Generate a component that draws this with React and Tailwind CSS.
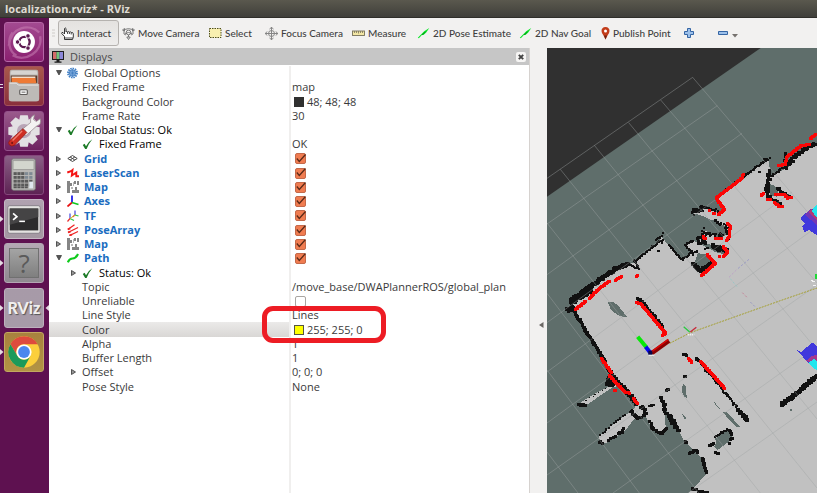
import React from "react";

/* ---------- small drawing helpers ---------- */

function noise(n) {
  const s = Math.sin(n * 127.1) * 43758.5453;
  return s - Math.floor(s);
}

/* Occupied map cells scattered along a polyline */
function Wall({ pts, size = 6, jitter = 0, step = 3, skip = 0, color = "#111111" }) {
  let d = "";
  let k = pts.length * 13 + pts[0][0];
  for (let i = 0; i < pts.length - 1; i++) {
    const [x0, y0] = pts[i];
    const [x1, y1] = pts[i + 1];
    const n = Math.max(1, Math.round(Math.hypot(x1 - x0, y1 - y0) / step));
    for (let j = 0; j <= n; j++) {
      k += 1;
      if (noise(k + 0.5) < skip) continue;
      const x = Math.round((x0 + ((x1 - x0) * j) / n + (noise(k) - 0.5) * jitter - size / 2) / 3) * 3;
      const y = Math.round((y0 + ((y1 - y0) * j) / n + (noise(k + 7) - 0.5) * jitter - size / 2) / 3) * 3;
      d += `M${x} ${y}h${size}v${size}h${-size}z`;
    }
  }
  return <path d={d} fill={color} />;
}

const walls = [
  { pts: [[810, 68], [775, 88], [745, 108], [728, 130], [718, 142]], size: 9, jitter: 7 },
  { pts: [[714, 106], [720, 130]], size: 9, jitter: 10 },
  { pts: [[712, 140], [675, 168], [662, 165]], size: 6, jitter: 4 },
  { pts: [[664, 150], [668, 180], [658, 205], [665, 228], [685, 245], [706, 258]], size: 9, jitter: 9, skip: 0.2 },
  { pts: [[690, 205], [715, 225], [735, 232]], size: 9, jitter: 8, skip: 0.2 },
  { pts: [[660, 118], [560, 192], [507, 234], [532, 268], [520, 280]], size: 6, jitter: 3 },
  { pts: [[652, 118], [668, 118]], size: 6, jitter: 8 },
  { pts: [[636, 157], [640, 157]], size: 6 },
  { pts: [[516, 275], [488, 266], [462, 264], [434, 276], [446, 280], [470, 268]], size: 6, jitter: 10, skip: 0.1 },
  { pts: [[445, 272], [470, 264]], size: 9, jitter: 10 },
  { pts: [[500, 300], [520, 312], [540, 322], [546, 350], [540, 360]], size: 6, jitter: 10, skip: 0.2 },
  { pts: [[472, 325], [466, 350], [478, 342], [500, 344], [530, 346]], size: 6, jitter: 10, skip: 0.1 },
  { pts: [[452, 355], [478, 366], [450, 370]], size: 9, jitter: 12 },
  { pts: [[498, 378], [525, 388], [538, 396]], size: 12, jitter: 10 },
  { pts: [[436, 362], [416, 374], [428, 390], [438, 398]], size: 6, jitter: 4 },
  { pts: [[436, 396], [406, 420], [364, 374]], size: 6, jitter: 3 },
  { pts: [[440, 434], [460, 452], [498, 428]], size: 12, jitter: 3 },
  { pts: [[440, 405], [448, 392], [482, 384], [485, 405]], size: 6, jitter: 8, skip: 0.4 },
  { pts: [[334, 394], [336, 394]], size: 6 },
  { pts: [[346, 346], [334, 358], [350, 362]], size: 6, jitter: 14 },
  { pts: [[340, 362], [262, 426]], size: 6, jitter: 3 },
  { pts: [[262, 422], [275, 444], [244, 432]], size: 6, jitter: 7 },
  { pts: [[244, 432], [206, 446], [152, 484], [110, 514]], size: 12, jitter: 5 },
  { pts: [[130, 508], [74, 542]], size: 18, jitter: 6 },
  { pts: [[72, 545], [78, 566], [60, 566], [74, 574]], size: 9, jitter: 8 },
  { pts: [[82, 576], [112, 624], [166, 712], [190, 758]], size: 9, jitter: 4 },
  { pts: [[190, 758], [215, 792], [244, 818], [268, 850]], size: 12, jitter: 6 },
  { pts: [[178, 786], [200, 792], [188, 780]], size: 12, jitter: 12 },
  { pts: [[96, 854], [116, 854]], size: 9, jitter: 4 },
  { pts: [[112, 846], [186, 796]], size: 3, jitter: 4, skip: 0.6 },
  { pts: [[262, 868], [222, 892], [186, 922], [160, 944]], size: 6, jitter: 5, skip: 0.7 },
  { pts: [[154, 964], [172, 970], [196, 956], [236, 926]], size: 9, jitter: 6, skip: 0.6 },
  { pts: [[258, 880], [272, 896], [264, 884]], size: 9, jitter: 10 },
  { pts: [[270, 864], [290, 862], [296, 882], [282, 894]], size: 9, jitter: 9, skip: 0.5 },
  { pts: [[306, 856], [320, 856]], size: 6, jitter: 4 },
  { pts: [[306, 900], [318, 928], [344, 940], [358, 926]], size: 9, jitter: 4, skip: 0.2 },
  { pts: [[342, 832], [352, 854], [352, 876], [372, 892], [394, 926]], size: 9, jitter: 8, skip: 0.2 },
  { pts: [[368, 890], [392, 930]], size: 9, jitter: 12 },
  { pts: [[358, 810], [364, 808]], size: 9 },
  { pts: [[412, 768], [414, 768]], size: 9 },
  { pts: [[410, 702], [418, 706]], size: 9 },
  { pts: [[414, 964], [418, 968]], size: 9 },
  { pts: [[428, 1000], [446, 990], [452, 1000]], size: 9, jitter: 4 },
  { pts: [[466, 1016], [472, 1038], [480, 1058]], size: 9, jitter: 5 },
  { pts: [[434, 1104], [456, 1116], [478, 1116]], size: 9, jitter: 7 },
  { pts: [[448, 714], [478, 748], [520, 800], [560, 850], [602, 904]], size: 6, jitter: 5 },
  { pts: [[448, 714], [454, 724]], size: 9, jitter: 5 },
  { pts: [[476, 752], [486, 760]], size: 9, jitter: 6 },
  { pts: [[574, 870], [600, 900]], size: 12, jitter: 4 },
  { pts: [[280, 540], [306, 572], [348, 620]], size: 9, jitter: 4 },
  { pts: [[272, 536], [276, 540]], size: 9 },
  { pts: [[704, 852], [734, 834], [770, 802], [810, 766]], size: 12, jitter: 5 },
  { pts: [[504, 952], [542, 928]], size: 6, jitter: 4 },
  { pts: [[546, 930], [558, 950], [540, 976]], size: 9, jitter: 3, skip: 0.6 },
  { pts: [[488, 978], [500, 972]], size: 9, jitter: 3 },
  { pts: [[502, 996], [520, 1006]], size: 9, jitter: 4, skip: 0.4 },
];

const scans = [
  { pts: [[808, 42], [790, 56]] },
  { pts: [[788, 74], [764, 76], [740, 94], [718, 112], [716, 134], [694, 136]] },
  { pts: [[588, 162], [584, 174], [560, 194], [507, 234], [532, 268], [514, 284]] },
  { pts: [[486, 272], [488, 272]] },
  { pts: [[500, 280], [502, 280]] },
  { pts: [[642, 226], [650, 220]] },
  { pts: [[660, 238], [670, 238]] },
  { pts: [[686, 222], [710, 222], [722, 234], [732, 232]] },
  { pts: [[682, 248], [698, 260], [706, 258]] },
  { pts: [[542, 310], [550, 320], [546, 350], [538, 360]] },
  { pts: [[504, 356], [524, 356]] },
  { pts: [[468, 350], [474, 356]] },
  { pts: [[528, 380], [542, 396], [530, 408]] },
  { pts: [[516, 408], [518, 408]] },
  { pts: [[480, 404], [504, 430], [464, 466]] },
  { pts: [[268, 468], [272, 466]] },
  { pts: [[222, 470], [206, 480]] },
  { pts: [[186, 484], [156, 506], [128, 534]] },
  { pts: [[116, 544], [86, 568]] },
  { pts: [[268, 548], [282, 552], [356, 640], [346, 646]] },
  { pts: [[162, 714], [192, 756]] },
  { pts: [[186, 766], [236, 818]] },
  { pts: [[202, 812], [204, 812]] },
  { pts: [[244, 818], [246, 820]] },
  { pts: [[260, 836], [270, 850]] },
  { pts: [[424, 716], [434, 726]] },
  { pts: [[460, 724], [532, 804]] },
];

const gridLines = [
  "M437 -128L0 175", "M511 -43L0 312", "M585 40L0 464", "M660 126L0 608", "M735 216L0 756",
  "M810 320L0 909", "M810 495L0 1065", "M810 681L198 1119", "M810 846L423 1119",
  "M437 -128L810 309", "M341 -60L810 489", "M245 8L810 690", "M142 76L810 897", "M40 148L810 1104",
  "M0 309L640 1119", "M0 520L455 1119", "M0 750L277 1119", "M0 996L93 1119",
];

function MapView() {
  return (
    <svg
      className="block h-full w-full bg-[#303030]"
      viewBox="0 -216 810 1335"
      preserveAspectRatio="xMinYMin slice"
      role="img"
      aria-label="Map view"
    >
      <path d="M0 230L641 -216H2400V1500H0z" fill="#5f6e6b" />
      <g shapeRendering="crispEdges">
        <path
          fill="#c1c1c1"
          d="M2400 -1000L810 68L770 90L740 115L725 140L690 160L672 168L664 118L600 165L510 232L533 268L515 280L500 268L470 264L440 280L468 288L490 298L500 318L542 345L510 352L476 332L460 352L455 366L500 376L540 390L535 404L505 396L480 382L440 362L418 374L436 398L408 420L365 375L342 350L336 364L262 428L245 432L205 448L150 485L75 540L64 566L82 576L165 715L186 762L184 800L142 822L100 848L98 858L120 854L196 802L212 798L266 852L262 866L186 922L156 950L160 970L180 968L236 930L262 896L296 890L316 926L344 940L356 924L354 880L344 836L362 880L378 892L394 928L412 964L440 990L470 1020L480 1060L426 1119H2400z"
        />
        <g fill="#5f6e6b">
          <path d="M664 190L680 196L694 210L690 230L672 226L660 206z" />
          <path d="M488 298L504 302L538 320L542 346L524 344L484 318z" />
          <path d="M452 400L478 402L492 416L492 432L462 444L442 430z" />
          <path d="M182 546L200 546L216 560L240 590L230 592L210 584L192 570z" />
          <path d="M408 792L416 800L416 816L422 834L412 830L404 812z" />
          <path d="M404 880L410 884L420 898L412 896z" />
          <path d="M502 846L526 876L540 876L580 922L566 920L530 880L504 854z" />
          <path d="M504 956L540 932L556 944L550 962L512 990L502 980L508 966z" />
          <path d="M730 866h6v6h-6z" />
        </g>
        {walls.map((w, i) => (
          <Wall key={i} {...w} />
        ))}
      </g>
      <g stroke="#a0a4a4" strokeOpacity="0.42" strokeWidth="3" fill="none">
        {gridLines.map((d) => (
          <path key={d} d={d} />
        ))}
      </g>
      <g shapeRendering="crispEdges">
        {scans.map((s, i) => (
          <Wall key={i} color="#fb0606" size={9} {...s} />
        ))}
        <path d="M760 294L792 266L810 270V346L800 340L788 330L772 336L766 318L774 312z" fill="#4038dc" />
        <path d="M774 284L788 268L798 270L810 292V316z" fill="#7436b4" />
        <path d="M784 276L794 268L810 290V302z" fill="#b03a78" />
        <path d="M794 272L810 252V294z" fill="#22e6ee" />
        <path d="M750 690L762 696L796 668L810 678V752L786 732z" fill="#4038dc" />
        <path d="M778 722L792 710L810 704V744z" fill="#a23a90" />
        <path d="M784 730L800 716L810 726V752z" fill="#22e6ee" />
        <path d="M804 462h6v15h-6z" fill="#20d838" />
        <path d="M792 480h6v3h6v3h-9z M798 496h9v3h-9z" fill="#f4f4f4" />
      </g>
      <path d="M368 670L430 638L700 542L810 504" stroke="#a5a032" strokeWidth="3" strokeDasharray="6 3" fill="none" />
      <g fill="none" strokeWidth="3" strokeOpacity="0.6" strokeDasharray="7 5">
        <path d="M606 418L570 448" stroke="#8484c8" />
        <path d="M568 450L544 474" stroke="#b890c8" />
        <path d="M550 476L570 500" stroke="#80c8c8" />
        <path d="M586 518L600 532" stroke="#c86080" />
        <path d="M610 546L624 560" stroke="#8080c0" />
      </g>
      <path d="M410 620L428 636" stroke="#28c840" strokeWidth="4" />
      <path d="M430 636L448 622" stroke="#c82838" strokeWidth="4" />
      <path d="M422 644h20" stroke="#eeeeee" strokeWidth="5" strokeDasharray="4 2" />
      <path d="M272 650L298 682" stroke="#08e808" strokeWidth="12" />
      <path d="M296 680L310 698" stroke="#0808f0" strokeWidth="12" />
      <path d="M314 700L366 662" stroke="#8c0000" strokeWidth="13" />
      <path d="M314 695L364 658" stroke="#d80808" strokeWidth="5" />
      <path d="M304 692h12v14h-12z" fill="#08084a" />
      <path d="M304 706h18" stroke="#e8e8e8" strokeWidth="4" />
    </svg>
  );
}

/* ---------- launcher ---------- */

function UbuntuIcon() {
  return (
    <svg viewBox="0 0 40 40" className="size-full">
      <path d="M4 24C6 4 26 0 36 10M37 14C40 30 22 42 8 34M8 10C2 18 4 30 12 34" fill="none" stroke="#c880b4" strokeWidth="2.500" opacity=".55" />
      <circle cx="20" cy="20" r="11.500" fill="#fff" />
      <circle cx="20.500" cy="20" r="5.400" fill="none" stroke="#5c1a52" strokeWidth="2.600" />
      <path d="M20.500 20H10M20.500 20L26 10.500M20.500 20L26 29.500" stroke="#fff" strokeWidth="1.400" />
      <circle cx="20.500" cy="20" r="4" fill="#fff" />
      <g fill="#5c1a52" stroke="#fff" strokeWidth="1">
        <circle cx="13.200" cy="20" r="2.400" />
        <circle cx="24.200" cy="13.600" r="2.400" />
        <circle cx="24.200" cy="26.400" r="2.400" />
      </g>
    </svg>
  );
}

function FilesIcon() {
  return (
    <svg viewBox="0 0 40 40" className="size-full">
      <path d="M5 5Q5 3 7 3H33Q35 3 35 5V34Q35 36 33 36H7Q5 36 5 34z" fill="#b9b5b0" />
      <path d="M6 6Q6 4 8 4H32Q34 4 34 6V8H6z" fill="#d6d3d0" />
      <path d="M6 9H34V17H6z" fill="#5a3a2c" />
      <path d="M7 10H32V12H7z" fill="#f4dcc8" />
      <path d="M7 11.500H32L33 17H7z" fill="#ee7a35" />
      <path d="M4 16H13L15 18H36V34Q36 36 34 36H6Q4 36 4 34z" fill="#bdbab7" />
      <path d="M5 17H12L14 19H35" fill="none" stroke="#ece9e7" />
      <rect x="15.500" y="24" width="8" height="5" rx="1" fill="#f4f4f4" stroke="#5f5c5a" strokeWidth="1.200" />
      <path d="M17.500 26.500h4" stroke="#6b6866" />
    </svg>
  );
}

function SettingsIcon() {
  return (
    <svg viewBox="0 0 40 40" className="size-full">
      <g fill="#e3e0e3">
        <circle cx="20" cy="20" r="12.500" />
        {[0, 45, 90, 135, 180, 225, 270, 315].map((a) => (
          <path key={a} d="M16 3.500h8l1.500 7h-11z" transform={`rotate(${a} 20 20)`} />
        ))}
      </g>
      <circle cx="20" cy="20" r="7.500" fill="#b9a5b7" />
      <path d="M16 20L27 11Q26 5 31 3L30 8L33 10L37 7Q39 13 33 15L22 25z" fill="#f4f2f2" stroke="#97898f" strokeWidth=".8" />
      <path d="M19 17.500L23 21.500L10 35Q7 37 4.500 34.500Q3 32 5 30z" fill="#cf2d22" stroke="#8f1712" strokeWidth=".8" />
      <path d="M18 20L8 30" stroke="#f08072" strokeWidth="1.400" />
      <circle cx="7.500" cy="32.500" r="1" fill="#651010" />
    </svg>
  );
}

function CalculatorIcon() {
  return (
    <svg viewBox="0 0 40 40" className="size-full">
      <rect x="7" y="3" width="25" height="33" rx="2" fill="#b8b7b5" stroke="#777" strokeWidth=".8" />
      <rect x="8.500" y="5" width="22" height="9" fill="#d3d6ce" stroke="#8a8a88" strokeWidth=".6" />
      {[17, 21, 25, 29].map((y, r) =>
        [9, 13, 17, 21, 25.5].map((x, c) => (
          <rect key={`${x}-${y}`} x={x} y={y} width="3.400" height="3" fill={c > 2 && r < 2 ? "#7f8a94" : "#5a5a5a"} />
        ))
      )}
      <path d="M9 33h15" stroke="#555" strokeWidth="2" strokeDasharray="3.400 .6" />
      <rect x="25.500" y="27" width="4" height="7" fill="#e0e8ee" />
    </svg>
  );
}

function TerminalIcon() {
  return (
    <svg viewBox="0 0 40 40" className="size-full">
      <rect x="3" y="6" width="34" height="29" rx="2" fill="#e4e3e1" stroke="#77727a" strokeWidth=".8" />
      <rect x="5" y="9" width="30" height="23" fill="#2c2b2c" />
      <path d="M5 9H35V18L5 26z" fill="#454445" />
      <path d="M8.500 14L12.500 17.500L8.500 21" fill="none" stroke="#fff" strokeWidth="1.800" />
      <path d="M15 22.500h6" stroke="#fff" strokeWidth="1.600" />
    </svg>
  );
}

function ChromeIcon() {
  return (
    <svg viewBox="0 0 40 40" className="size-full">
      <circle cx="20" cy="20" r="16.500" fill="#fbcf3c" />
      <path d="M5.700 11.750A16.500 16.500 0 0 1 34.300 11.750H20A8 8 0 0 0 13 24z" fill="#dd4b3e" />
      <path d="M5.700 11.750A16.500 16.500 0 0 0 20 36.500L27 24A8 8 0 0 1 13 24z" fill="#1b9a5a" />
      <circle cx="20" cy="20" r="8" fill="#fff" />
      <circle cx="20" cy="20" r="6.200" fill="#4b87ee" />
    </svg>
  );
}

const launcherItems = [
  { name: "Search your computer", tile: "bg-linear-to-b from-[#a34a91] to-[#8a1f70] border-[#b565a6]", icon: <UbuntuIcon /> },
  { name: "Files", tile: "bg-linear-to-b from-[#a8584c] to-[#8a2f3c] border-[#a4515a]", icon: <FilesIcon />, marks: 2 },
  { name: "System Settings", tile: "bg-linear-to-b from-[#9a5a8c] to-[#6e2160] border-[#93508a]", icon: <SettingsIcon /> },
  { name: "Calculator", tile: "bg-linear-to-b from-[#8a5f86] to-[#5d2354] border-[#85477b]", icon: <CalculatorIcon /> },
  { name: "Terminal", tile: "bg-linear-to-b from-[#b0a2b0] to-[#a498a2] border-[#c4b8c4]", icon: <TerminalIcon />, marks: 1 },
  {
    name: "Unknown window",
    tile: "bg-linear-to-b from-[#b4a9b4] to-[#8f8a90] border-[#b4a6b4]",
    icon: (
      <span className="m-[4px] flex flex-1 items-center justify-center border border-[#707070] bg-linear-to-b from-[#a4a4a4] to-[#7f7f7f] text-[26px] leading-none text-[#5a5a5a]">
        ?
      </span>
    ),
    marks: 1,
  },
  {
    name: "RViz",
    tile: "bg-linear-to-b from-[#a79aa8] to-[#a79ba8] border-[#bdb0bd]",
    icon: (
      <span className="flex flex-1 items-center justify-center font-['Lato',sans-serif] text-[16px] leading-none font-black text-[#f0eeee] [text-shadow:1px_1px_1px_#555]">
        RViz
      </span>
    ),
    marks: 1,
    active: true,
  },
  { name: "Chrome", tile: "bg-linear-to-b from-[#a8823e] to-[#b29444] border-[#c2a860]", icon: <ChromeIcon />, marks: 1 },
];

function Launcher() {
  return (
    <nav aria-label="Launcher" className="w-[49px] shrink-0 bg-[#5e1150] pt-[4px]">
      <ul className="flex h-[350px] flex-col justify-between">
        {launcherItems.map((item) => (
          <li key={item.name} className="flex h-[40px] items-center">
            <span className="flex w-[4px] flex-col justify-center gap-px">
              {item.marks === 1 && (
                <svg viewBox="0 0 4 6" className="h-[6px] w-[4px]"><path d="M0 0L3.500 3L0 6z" fill="#e4dce2" /></svg>
              )}
              {item.marks === 2 && (
                <svg viewBox="0 0 4 6" className="h-[6px] w-[4px]"><path d="M0 1.500h3M0 4.500h3" stroke="#e4dce2" /></svg>
              )}
            </span>
            <button aria-label={item.name} className={`flex size-[40px] rounded-[3px] border ${item.tile}`}>
              {item.icon}
            </button>
            {item.active && (
              <svg viewBox="0 0 4 6" className="ml-px h-[6px] w-[4px]"><path d="M4 0L.5 3L4 6z" fill="#e4dce2" /></svg>
            )}
          </li>
        ))}
      </ul>
    </nav>
  );
}

/* ---------- toolbar ---------- */

const icon13 = "size-[13px] shrink-0";

function HandIcon() {
  return (
    <svg viewBox="0 0 13 13" className={icon13}>
      <path d="M3.500 12.500V9.500L.7 6.500Q.6 5 2 5.500L3.500 7V1.500Q4.200 .2 5 1.500V5Q5.800 3.800 6.600 5Q7.600 3.900 8.400 5.200Q9.500 4.300 10.200 5.600Q12 5 12.300 6.800V10L11.500 12.500z" fill="#fff" stroke="#222" strokeWidth=".9" />
      <path d="M6.600 5V7M8.400 5.200V7M10.200 5.600V7.500M3.500 11h8.300" stroke="#222" strokeWidth=".8" />
    </svg>
  );
}

function MoveIcon() {
  return (
    <svg viewBox="0 0 13 13" className={icon13}>
      <g fill="none" stroke="#6e6e6e" strokeWidth=".9">
        <path d="M2.500 2.500Q6.500 .8 10.500 2.500M3 6.500Q6.500 4.500 10 6.500M.5 3L2.500 1.500V4L.5 3zM12.500 3L10.500 1.500V4z" />
        <circle cx="6.500" cy="5.500" r="2.300" />
        <path d="M2 4V7L4 8M11 4V7L9 8M6.500 8V10M4.800 10h3.400L6.500 12.500z" />
      </g>
    </svg>
  );
}

function SelectIcon() {
  return (
    <svg viewBox="0 0 13 13" className={icon13}>
      <rect x=".5" y="1.500" width="11.500" height="9" fill="#f8efb0" stroke="#50501a" strokeDasharray="1.500 1" />
    </svg>
  );
}

function FocusIcon() {
  return (
    <svg viewBox="0 0 13 13" className={icon13}>
      <g fill="none" stroke="#858585" strokeWidth="1">
        <circle cx="6.500" cy="6.500" r="3" />
        <path d="M0 6.500H13M6.500 0V13M4.500 2L6.500 .4L8.500 2M4.500 11L6.500 12.600L8.500 11M2 4.500L.4 6.500L2 8.500M11 4.500L12.600 6.500L11 8.500" />
      </g>
    </svg>
  );
}

function MeasureIcon() {
  return (
    <svg viewBox="0 0 13 13" className={icon13}>
      <rect x=".5" y="4" width="12" height="4.500" fill="#f2e6a4" stroke="#77715a" strokeWidth=".9" />
      <path d="M2.500 4V6M4.500 4V6M6.500 4V6.500M8.500 4V6M10.500 4V6" stroke="#77715a" strokeWidth=".8" />
    </svg>
  );
}

function ArrowIcon() {
  return (
    <svg viewBox="0 0 13 13" className={icon13}>
      <path d="M.8 10.800L5 6.500L7.200 4.200L12.300 1L9.200 5.500L6.500 8L5.200 7.800L1.800 11.300z" fill="#08e626" />
      <path d="M5 8L8.500 4.800" stroke="#067a16" strokeWidth=".8" />
    </svg>
  );
}

function PinIcon() {
  return (
    <svg viewBox="0 0 9 13" className="h-[13px] w-[9px] shrink-0">
      <path d="M4.500 0Q8.500 .3 8.500 4Q8.500 6 6.500 8.500L4.500 12.500L2.500 8.500Q.5 6 .5 4Q.5 .3 4.500 0z" fill="#c23c1a" />
      <path d="M6 8.500L4.500 12.500L3 8.500z" fill="#6e2412" />
      <circle cx="4.500" cy="4" r="1.500" fill="#fff" />
    </svg>
  );
}

const tools = [
  { label: "Interact", width: "w-[61px]", icon: <HandIcon />, active: true },
  { label: "Move Camera", width: "w-[87px]", icon: <MoveIcon /> },
  { label: "Select", width: "w-[56px]", icon: <SelectIcon /> },
  { label: "Focus Camera", width: "w-[87px]", icon: <FocusIcon /> },
  { label: "Measure", width: "w-[65px]", icon: <MeasureIcon /> },
  { label: "2D Pose Estimate", width: "w-[102px]", icon: <ArrowIcon /> },
  { label: "2D Nav Goal", width: "w-[82px]", icon: <ArrowIcon /> },
  { label: "Publish Point", width: "w-[83px]", icon: <PinIcon /> },
];

function Toolbar() {
  return (
    <div role="toolbar" className="flex h-[30px] shrink-0 items-center bg-[#f2f1f0] pl-[2px] font-['Lato',sans-serif] text-[10px] font-medium text-[#3f3f3f]">
      <svg viewBox="0 0 7 8" className="h-[8px] w-[7px] shrink-0">
        <path d="M1 1h3M1 4h3M1 7h3" stroke="#cfccc9" />
      </svg>
      {tools.map((t) => (
        <button
          key={t.label}
          className={`flex h-[26px] shrink-0 items-center gap-[3px] rounded-[3px] border pl-[2px] whitespace-nowrap ${t.width} ${
            t.active ? "border-[#b5b2af] bg-linear-to-b from-[#e4e2e0] to-[#eeedec]" : "border-transparent"
          }`}
        >
          {t.icon}
          {t.label}
        </button>
      ))}
      <button aria-label="Add tool" className="flex w-[34px] shrink-0 pl-[3px]">
        <svg viewBox="0 0 10 10" className="size-[10px]">
          <path d="M3.500 .5h3v3h3v3h-3v3h-3v-3h-3v-3h3z" fill="#9cc0ea" stroke="#3465a4" />
        </svg>
      </button>
      <button aria-label="Remove tool" className="flex shrink-0 items-center gap-[4px] pl-[3px]">
        <svg viewBox="0 0 10 10" className="size-[10px]">
          <path d="M.5 3.500h9v3h-9z" fill="#9cc0ea" stroke="#3465a4" />
        </svg>
        <svg viewBox="0 0 6 10" className="h-[10px] w-[6px]">
          <path d="M0 6h6L3 9.500z" fill="#76726e" />
        </svg>
      </button>
    </div>
  );
}

/* ---------- displays panel ---------- */

const rowIcon = "h-[12px] w-[12px] shrink-0";

const icons = {
  gear: (
    <svg viewBox="0 0 12 12" className={rowIcon}>
      <circle cx="5.500" cy="6" r="4.500" fill="none" stroke="#3f7fc6" strokeWidth="1.800" strokeDasharray="1.500 .8" />
      <circle cx="5.500" cy="6" r="3.200" fill="#86b1e2" stroke="#3b78bd" strokeWidth=".8" />
      <path d="M5.500 2V10M1.500 6H9.500M2.700 3.200L8.300 8.800M8.300 3.200L2.700 8.800" stroke="#3b78bd" strokeWidth=".6" />
    </svg>
  ),
  check: (
    <svg viewBox="0 0 12 12" className={rowIcon}>
      <path d="M.8 7L2.600 5.800L4 8.200Q6.500 3.500 10.300 1.300Q6.800 5.500 4.600 11H3.200z" fill="#1b7a26" />
    </svg>
  ),
  grid: (
    <svg viewBox="0 0 12 12" className={rowIcon}>
      <path d="M.8 5.500L5.500 2.500L10.200 5.500L5.500 8.500zM3.100 4L7.800 7M7.800 4L3.100 7" fill="none" stroke="#444" strokeWidth="1" />
    </svg>
  ),
  laser: (
    <svg viewBox="0 0 12 12" className={rowIcon}>
      <path d="M.3 5.500L4 4.200L5.500 3L4.800 8.500L9.300 5.500V9.300H12" fill="none" stroke="#f41414" strokeWidth="1.900" />
    </svg>
  ),
  map: (
    <svg viewBox="0 0 12 12" className={rowIcon}>
      <path d="M0 0h3v2h2v3h-2v7h-3zM7 0h2v3h-2zM10 0h2v4h-2zM5 9h3v-3h2v3h2v3h-7z" fill="#858585" />
      <path d="M4 6h2v2h-2zM6 1h1v4h-1z" fill="#b8b8b8" />
    </svg>
  ),
  axes: (
    <svg viewBox="0 0 12 12" className={rowIcon}>
      <path d="M5 7.500V.5" stroke="#2020e8" strokeWidth="1.800" />
      <path d="M5 7.500L.5 11.500" stroke="#e81010" strokeWidth="1.700" />
      <path d="M5 7.500L11.500 9.500" stroke="#10c820" strokeWidth="1.700" />
    </svg>
  ),
  tf: (
    <svg viewBox="0 0 12 12" className={rowIcon}>
      <path d="M8 5V.5M3 8.500V3.500" stroke="#4444e0" strokeWidth="1.200" />
      <path d="M3 8.500L.5 11.500M8 5L5.500 7" stroke="#e83030" strokeWidth="1.200" />
      <path d="M3 8.500L7 10.500M8 5L11.500 6" stroke="#30c840" strokeWidth="1.200" />
      <path d="M3 8.500L8 5" stroke="#d8c020" strokeWidth=".9" />
    </svg>
  ),
  poses: (
    <svg viewBox="0 0 12 12" className={rowIcon}>
      <path d="M.8 5.500L7.500 .8M1 8.500L11 3.500M2.500 11.500L11 7.500" stroke="#ee2424" strokeWidth="1.300" />
      <path d="M.8 5.400l2.500-1M1 8.400l2.500-.8M2.500 11.400l2.500-.8" stroke="#ee2424" strokeWidth="1.700" />
    </svg>
  ),
  path: (
    <svg viewBox="0 0 12 12" className={rowIcon}>
      <path d="M.8 10.300Q2.500 6.500 5.500 6.500Q8.800 6.500 11 2" fill="none" stroke="#0fca1c" strokeWidth="2.200" />
    </svg>
  ),
};

const rows = [
  { name: "Global Options", kind: "top", icon: "gear", arrow: "open" },
  { name: "Fixed Frame", value: "map" },
  { name: "Background Color", value: "48; 48; 48", swatch: "bg-[#303030] border-[#303030]" },
  { name: "Frame Rate", value: "30" },
  { name: "Global Status: Ok", kind: "status", icon: "check", arrow: "open" },
  { name: "Fixed Frame", kind: "substatus", icon: "check", value: "OK" },
  { name: "Grid", kind: "display", icon: "grid", arrow: "closed", checked: true },
  { name: "LaserScan", kind: "display", icon: "laser", arrow: "closed", checked: true },
  { name: "Map", kind: "display", icon: "map", arrow: "closed", checked: true },
  { name: "Axes", kind: "display", icon: "axes", arrow: "closed", checked: true },
  { name: "TF", kind: "display", icon: "tf", arrow: "closed", checked: true },
  { name: "PoseArray", kind: "display", icon: "poses", arrow: "closed", checked: true },
  { name: "Map", kind: "display", icon: "map", arrow: "closed", checked: true },
  { name: "Path", kind: "display", icon: "path", arrow: "open", checked: true },
  { name: "Status: Ok", kind: "substatus", icon: "check", arrow: "closed" },
  { name: "Topic", value: "/move_base/DWAPlannerROS/global_plan" },
  { name: "Unreliable", checked: false },
  { name: "Line Style", value: "Lines" },
  { name: "Color", value: "255; 255; 0", swatch: "bg-[#ffff00] border-[#555544]", selected: true },
  { name: "Alpha", value: "1" },
  { name: "Buffer Length", value: "1" },
  { name: "Offset", value: "0; 0; 0", arrow: "closed" },
  { name: "Pose Style", value: "None" },
];

function Expander({ state }) {
  return (
    <svg viewBox="0 0 8 8" className="size-[8px] shrink-0">
      {state === "open" && <path d="M1.500 1.500H6.500L4 6z" fill="#555" stroke="#333" strokeWidth=".7" />}
      {state === "closed" && <path d="M1.500 1.500V6.500L5.500 4z" fill="#999" stroke="#444" strokeWidth=".9" />}
    </svg>
  );
}

function CheckBox({ label, checked }) {
  return (
    <label className="ml-[2px] grid size-[12px] place-items-center">
      <input
        type="checkbox"
        aria-label={label}
        defaultChecked={checked}
        className="peer col-start-1 row-start-1 size-[11px] appearance-none rounded-[2px] border border-[#a9a5a1] bg-white checked:border-[#c4694a] checked:bg-[#f07c50]"
      />
      <svg viewBox="0 0 12 12" className="pointer-events-none invisible col-start-1 row-start-1 size-[12px] peer-checked:visible">
        <path d="M2.800 5.500L5.300 8.500L11.500 1.500" fill="none" stroke="#5a2a18" strokeWidth="1.300" />
      </svg>
    </label>
  );
}

function Row({ row, index }) {
  const isTop = row.kind === "top" || row.kind === "status" || row.kind === "display";
  const color =
    row.kind === "display"
      ? "font-bold text-[#1a6cc0]"
      : row.kind === "status" || row.kind === "substatus"
        ? "text-black"
        : "text-[#3a3a3a]";
  return (
    <tr className={index % 4 === 2 ? "h-[15px]" : "h-[14px]"}>
      <td
        className={`w-[242px] border-r-2 border-[#f0efee] p-0 ${
          row.selected ? "bg-linear-to-b from-[#ebeae9] to-[#d9d7d5]" : ""
        }`}
      >
        <div className={`flex h-[14px] items-center ${color} ${isTop ? "pl-[6px]" : "pl-[21px]"}`}>
          <Expander state={row.arrow} />
          <span className="w-[4px]" />
          {row.icon && <span className="w-[17px]">{icons[row.icon]}</span>}
          {row.name}
        </div>
      </td>
      <td className="p-0">
        <div className="relative flex h-[14px] items-center pl-px text-[#3a3a3a]">
          {row.swatch && <span className={`mr-[3px] ml-[2px] size-[10px] border ${row.swatch}`} />}
          {row.checked !== undefined && <CheckBox label={row.name} checked={row.checked} />}
          {row.value}
          {row.selected && (
            <span className="pointer-events-none absolute -top-[17px] -left-[29px] z-10 h-[37px] w-[124px] rounded-[11px] border-5 border-[#ed1c24]" />
          )}
        </div>
      </td>
    </tr>
  );
}

function DisplaysPanel() {
  return (
    <section className="flex w-[481px] shrink-0 flex-col border-r border-[#d6d2cf] bg-white">
      <header className="flex h-[17px] shrink-0 items-center gap-[6px] bg-[#c6c6c6] pt-px pr-[3px] pl-[3px] text-[11px] text-[#4c4c4c]">
        <svg viewBox="0 0 12 12" className="size-[12px] shrink-0">
          <rect x="0" y="0" width="12" height="9" fill="#1d1d1d" />
          <path d="M1 1h3.500v7h-3.500z" fill="#d46a6a" />
          <path d="M4.500 1h3v7h-3z" fill="#6fc47c" />
          <path d="M7.500 1h3.500v7h-3.500z" fill="#8a86d8" />
          <path d="M4.500 9h3v1.500h2v1.300h-7v-1.300h2z" fill="#1d1d1d" />
        </svg>
        <h2 className="flex-1">Displays</h2>
        <button aria-label="Close" className="flex size-[10px] items-center justify-center rounded-[2px] bg-[#f6f5f4]">
          <svg viewBox="0 0 6 6" className="size-[6px]">
            <path d="M.8 .8L5.200 5.200M5.200 .8L.8 5.200" stroke="#444" strokeWidth="1.900" />
          </svg>
        </button>
      </header>
      <div className="min-h-0 flex-1 pt-px">
        <table className="h-full w-full table-fixed border-separate border-spacing-0 text-[11px] leading-[14px]">
          <tbody>
            {rows.map((row, i) => (
              <Row key={i} row={row} index={i} />
            ))}
            <tr>
              <td className="border-r-2 border-[#f0efee] p-0" />
              <td className="p-0" />
            </tr>
          </tbody>
        </table>
      </div>
    </section>
  );
}

export default function App() {
  return (
    <div className="flex h-screen flex-col overflow-hidden bg-[#f2f1f0] font-['Open_Sans','Noto_Sans',sans-serif]">
      <h1 className="flex h-[18px] shrink-0 items-center border-b border-[#2f2e2a] bg-linear-to-b from-[#5a584e] to-[#403f3a] pt-px pl-[5px] text-[11px] font-bold text-[#dfdbd2]">
        localization.rviz* - RViz
      </h1>
      <div className="flex min-h-0 flex-1">
        <Launcher />
        <main className="flex min-w-0 flex-1 flex-col">
          <Toolbar />
          <div className="flex min-h-0 flex-1">
            <DisplaysPanel />
            <button aria-label="Collapse panel" className="flex w-[17px] shrink-0 items-center justify-center pt-[109px] pl-[6px]">
              <svg viewBox="0 0 5 6" className="h-[6px] w-[5px]">
                <path d="M4.500 0V6L0 3z" fill="#6a6764" />
              </svg>
            </button>
            <div className="min-w-0 flex-1">
              <MapView />
            </div>
          </div>
        </main>
      </div>
    </div>
  );
}
